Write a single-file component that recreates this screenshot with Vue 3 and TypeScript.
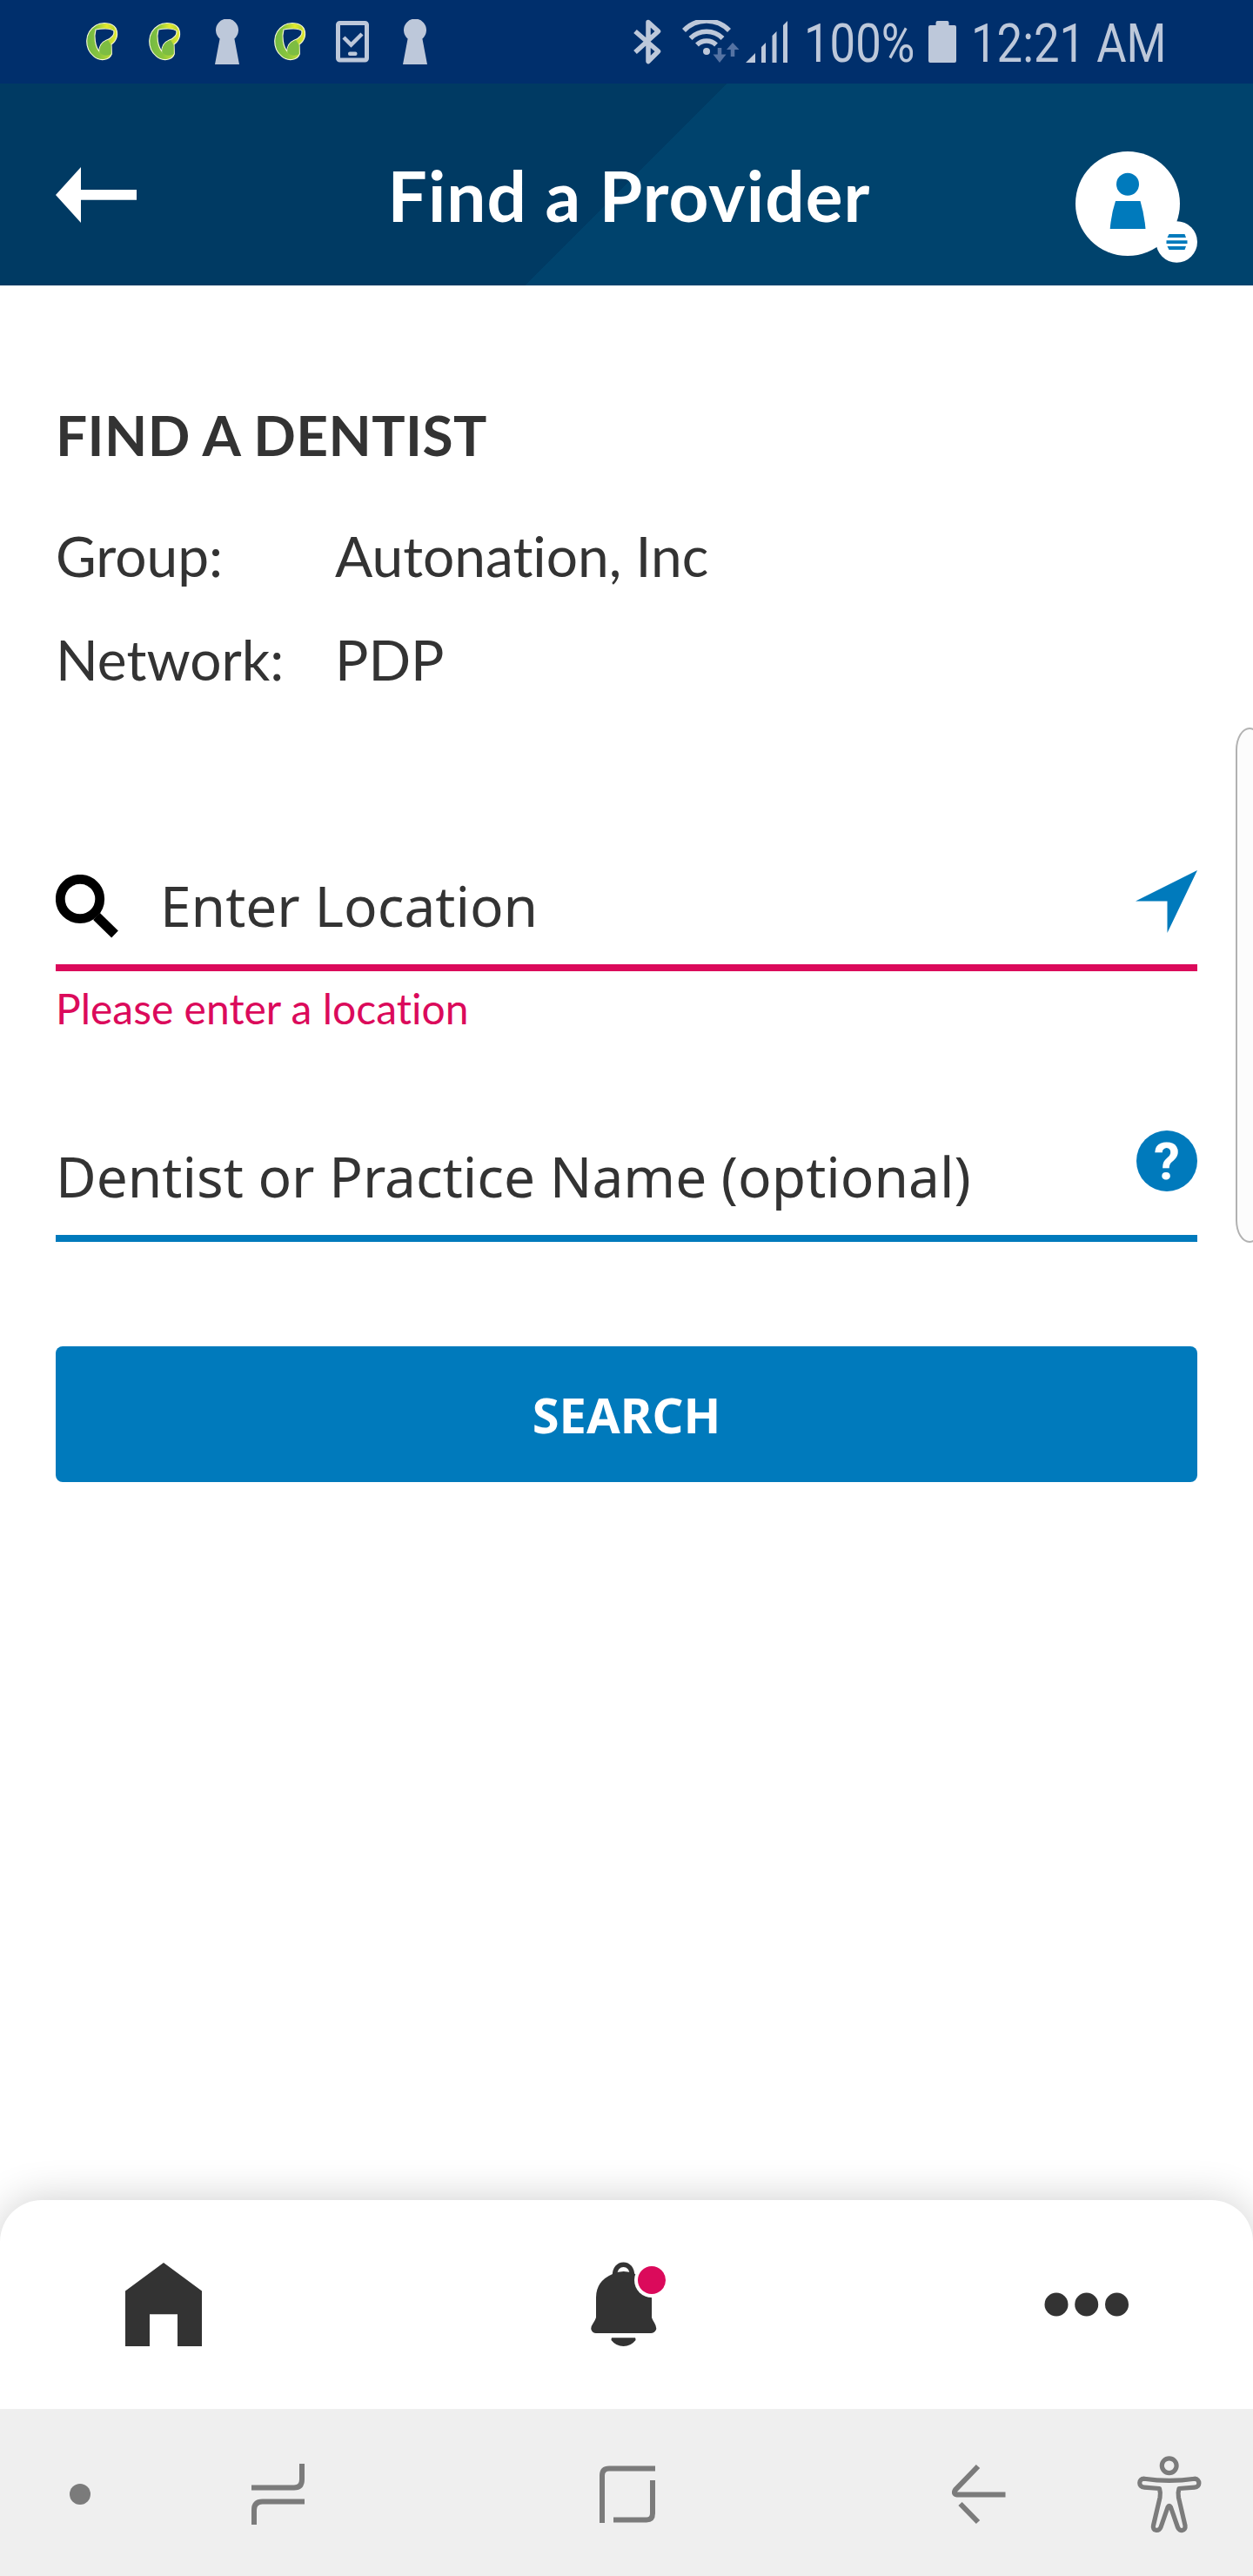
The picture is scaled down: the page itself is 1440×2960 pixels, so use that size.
<script setup lang="ts">
import { ref } from 'vue'

interface Detail {
  label: string
  value: string
}

type StatusIcon = 'leaf' | 'keyhole' | 'tablet'

const notifications: StatusIcon[] = ['leaf', 'leaf', 'keyhole', 'leaf', 'tablet', 'keyhole']

const details: Detail[] = [
  { label: 'Group:', value: 'Autonation, Inc' },
  { label: 'Network:', value: 'PDP' },
]

const location = ref('')
const practice = ref('')
</script>

<template>
  <div class="screen">
    <div class="status">
      <div class="notes">
        <span v-for="(icon, i) in notifications" :key="i" class="note">
          <svg v-if="icon === 'leaf'" width="40" height="48" viewBox="111 75 120 144">
            <defs>
              <linearGradient id="leafBody" x1="0" y1="0" x2="1" y2="0">
                <stop offset="0" stop-color="#72b944" />
                <stop offset="0.45" stop-color="#8cc63c" />
                <stop offset="1" stop-color="#e3e92f" />
              </linearGradient>
              <linearGradient id="leafTop" x1="0" y1="0" x2="1" y2="0">
                <stop offset="0" stop-color="#8cc63c" />
                <stop offset="0.6" stop-color="#e6ea2c" />
                <stop offset="1" stop-color="#b4d335" />
              </linearGradient>
            </defs>
            <path
              d="M150 91C168 79 206 79 219 100C229 121 223 143 204 156L205 189C197 212 163 215 143 197C112 171 108 117 150 91ZM150 105C143 130 148 162 162 180C162 163 170 149 186 142C201 136 215 127 213 110C203 99 169 101 150 105Z"
              fill="url(#leafBody)"
              fill-rule="evenodd"
              stroke="#f6f9d6"
              stroke-width="3.5"
            />
            <path d="M152 92C170 82 200 82 214 98L213 108C198 98 170 98 150 103Z" fill="url(#leafTop)" />
            <path d="M163 182C161 162 174 147 192 141L203 158L203 189C190 198 172 194 163 182Z" fill="#7dbd42" />
          </svg>
          <svg v-else-if="icon === 'keyhole'" width="28" height="52" viewBox="0 0 28 52">
            <path d="M5.600 22.500A13 13 0 1 1 22.400 22.500L28 52H0Z" fill="#bdc8da" />
          </svg>
          <svg v-else width="38" height="48" viewBox="0 0 38 48">
            <rect x="2.500" y="2.500" width="33" height="42.500" rx="2" fill="none" stroke="#bdc8da" stroke-width="5" />
            <path d="M9 19L17.500 27.500L30 15" fill="none" stroke="#bdc8da" stroke-width="4.500" />
            <rect x="14" y="35.500" width="10.500" height="4.500" rx="2" fill="#bdc8da" />
          </svg>
        </span>
      </div>
      <div class="signals">
        <svg class="bt" width="33" height="52" viewBox="0 0 33 52">
          <path d="M2 14L28.500 37L17 48.500V3.500L28.500 14L2 38" fill="none" stroke="#bdc8da" stroke-width="5.500" stroke-linejoin="round" />
        </svg>
        <svg class="wifi" width="66" height="50" viewBox="0 0 66 50">
          <g fill="none" stroke="#bdc8da" stroke-width="5.500">
            <path d="M2 12A36 36 0 0 1 54 12" />
            <path d="M9.500 21A26 26 0 0 1 46.500 21" />
            <path d="M17 28.500A15.500 15.500 0 0 1 39 28.500" />
          </g>
          <circle cx="28" cy="36" r="4" fill="#bdc8da" />
          <path d="M43 32V44M58 42V31" stroke="#5573a3" stroke-width="4.500" />
          <path d="M35.500 39.500H50.500L43 49ZM51 34H65.500L58 26Z" fill="#5573a3" />
        </svg>
        <svg class="bars" width="49" height="48" viewBox="0 0 49 48">
          <path d="M0 48L11 37V48ZM18 30L23 25V48H18ZM30.500 17L35.500 12V48H30.500ZM43 5L48 0V48H43Z" fill="#bdc8da" />
        </svg>
        <span class="percent"><b>100%</b></span>
        <svg class="battery" width="32" height="48" viewBox="0 0 32 48">
          <path d="M8.500 5V2Q8.500 0 10.500 0H21.500Q23.500 0 23.500 2V5H30Q32 5 32 7V46Q32 48 30 48H2Q0 48 0 46V7Q0 5 2 5Z" fill="#bdc8da" />
        </svg>
        <span class="clock"><b>12:21 AM</b></span>
      </div>
    </div>

    <header class="header">
      <svg class="back" width="93" height="64" viewBox="0 0 93 64">
        <path d="M0 32L29 0V26H93V37.700H29V64Z" fill="#fff" />
      </svg>
      <h1>Find a Provider</h1>
      <svg class="avatar" width="140" height="128" viewBox="0 0 140 128">
        <circle cx="60" cy="60" r="60" fill="#fff" />
        <circle cx="60" cy="37.700" r="13" fill="#007abc" />
        <path d="M46 57H74.500Q79 72 80.500 89H39.700Q41 72 46 57Z" fill="#007abc" />
        <circle cx="116.300" cy="104" r="23.700" fill="#fff" />
        <path d="M107.500 95H125.500L127 99H105.500ZM104.500 102.300H128.500V106H104.500ZM105.500 109H127L125.500 113H107.500Z" fill="#007abc" />
      </svg>
    </header>

    <main class="content">
      <h2>FIND A DENTIST</h2>
      <dl class="details">
        <div v-for="d in details" :key="d.label" class="detail">
          <dt>{{ d.label }}</dt>
          <dd>{{ d.value }}</dd>
        </div>
      </dl>

      <div class="field field-error">
        <svg class="lens" width="73" height="73" viewBox="0 0 73 73">
          <circle cx="28" cy="28" r="22.700" fill="none" stroke="#000" stroke-width="10.800" />
          <path d="M47 48L68 68.500" stroke="#000" stroke-width="11" />
        </svg>
        <input v-model="location" class="location" placeholder="Enter Location" />
        <svg class="locate" width="71" height="72" viewBox="0 0 71 72">
          <path d="M71 0L36.500 72V35.500H0Z" fill="#007abc" />
        </svg>
      </div>
      <p class="error">Please enter a location</p>

      <div class="field field-name">
        <input v-model="practice" placeholder="Dentist or Practice Name (optional)" />
        <span class="help">?</span>
      </div>

      <button class="search" type="button">SEARCH</button>
      <div class="edge"></div>
    </main>

    <nav class="tabs">
      <svg class="home" width="88" height="96" viewBox="0 0 88 96">
        <path d="M44 0L88 32.500V96H60V59.300H28V96H0V32.500Z" fill="#333" />
      </svg>
      <svg class="bell" width="90" height="98" viewBox="0 0 90 98">
        <path d="M27.500 17C26.500 -1.500 48.500 -1.500 47.500 17" fill="none" stroke="#333" stroke-width="5.500" />
        <path
          d="M25 14Q37.500 8 51 14Q70 22 70 43V64Q71 67 73 70Q76 75 75 78Q73 82 69 82H6Q2 82 0.500 78Q-0.500 75 3 70Q5 67 6 64V41Q6 22 25 14Z"
          fill="#333"
        />
        <path d="M24 87.300H51Q51.500 88 51.500 90Q46 97 37.500 97Q29 97 23.500 90Q23.500 88 24 87.300Z" fill="#333" />
        <circle cx="70" cy="21" r="20" fill="#fff" />
        <circle cx="70" cy="21" r="16" fill="#db0a5b" />
      </svg>
      <svg class="more" width="98" height="28" viewBox="0 0 98 28">
        <circle cx="14" cy="14" r="13.500" fill="#333" />
        <circle cx="48.700" cy="14" r="13.500" fill="#333" />
        <circle cx="83.500" cy="14" r="13.500" fill="#333" />
      </svg>
    </nav>

    <div class="system">
      <span class="dot"></span>
      <svg class="recent" width="62" height="70" viewBox="0 0 62 70">
        <path d="M0 27.500H49Q58 27.500 58 18V0M61 43.500H12.500Q3 43.500 3 53V70" fill="none" stroke="#7b7b7b" stroke-width="6" />
      </svg>
      <svg class="square" width="65" height="66" viewBox="0 0 65 66">
        <path d="M64 3.500H11Q3 3.500 3 11.500V66M61 17V55Q61 62.500 54 62.500H16" fill="none" stroke="#7b7b7b" stroke-width="6" />
      </svg>
      <svg class="return" width="62" height="70" viewBox="0 0 62 70">
        <path d="M61.500 35.500H6Q1 34.500 4 30L30 3M9.500 46L30 67" fill="none" stroke="#7b7b7b" stroke-width="6" />
      </svg>
      <svg class="person" width="74" height="90" viewBox="0 0 74 90">
        <g fill="none" stroke="#7b7b7b" stroke-width="5.200" stroke-linejoin="round">
          <circle cx="36.700" cy="11.200" r="8.400" />
          <path
            d="M8 26.200Q36.500 30.500 66 26.200C72.500 26.500 72.500 36 66 36.200L48 37.500Q46.500 42 47.500 48L55 80C56 86.500 48.500 87.500 46.500 82L38.500 59Q36.700 55.500 35 59L27 82C24.500 87.500 17 86 18.500 80L26 48Q27 42 25.500 37.500L8 36.200C1 36 1 26 8 26.200Z"
          />
        </g>
      </svg>
    </div>
  </div>
</template>

<style>
body {
  margin: 0;
}
</style>

<style scoped>
.screen {
  width: 1440px;
  height: 2960px;
  display: flex;
  flex-direction: column;
  overflow: hidden;
  background: #fff;
  color: #333;
  font-family: Lato, 'Open Sans', sans-serif;
  font-variant-ligatures: none;
}
svg {
  display: block;
  flex: none;
}
.status {
  height: 96px;
  background: #002f6c;
  display: flex;
  justify-content: space-between;
  color: #bdc8da;
}
.notes {
  display: flex;
  align-items: center;
  padding-left: 81px;
}
.note {
  width: 72px;
  display: flex;
  justify-content: center;
}
.signals {
  display: flex;
  align-items: center;
  width: 712px;
}
.signals b {
  display: inline-block;
  font-weight: 400;
  transform-origin: 0 50%;
  transform: scaleX(0.863);
}
.wifi {
  margin-left: 23px;
}
.bars {
  margin-left: 7px;
}
.percent,
.clock {
  font-family: Roboto, sans-serif;
  font-size: 61px;
  line-height: 96px;
  padding-top: 4px;
  white-space: nowrap;
}
.percent {
  width: 143px;
  margin-left: 18px;
}
.clock {
  margin-left: 17px;
  width: 225px;
}
.header {
  height: 232px;
  box-sizing: border-box;
  padding: 0 64px;
  display: flex;
  align-items: flex-start;
  justify-content: space-between;
  background: linear-gradient(135deg, #003a63 49.94%, #00436d 49.97%);
}
.back {
  margin-top: 96px;
}
h1 {
  margin: 78px 0 0 53px;
  font-size: 80px;
  line-height: 100px;
  color: #fff;
  letter-spacing: 1.1px;
}
.avatar {
  margin-top: 78px;
}
.content {
  position: relative;
  flex: 1;
  padding: 132px 64px 0;
}
h2 {
  margin: 0;
  font-size: 64px;
  line-height: 80px;
  letter-spacing: 0.4px;
}
.details {
  margin: 59px 0 0;
  font-size: 64px;
  line-height: 80px;
  display: flex;
  flex-direction: column;
  gap: 39px;
}
.detail {
  display: flex;
}
dt {
  width: 321px;
}
dd {
  margin: 0;
}
.field {
  display: flex;
  align-items: flex-start;
  box-sizing: border-box;
  border-bottom: 8px solid #007abc;
}
.field input {
  flex: 1;
  min-width: 0;
  height: 80px;
  padding: 0;
  border: 0;
  outline: 0;
  background: none;
  font: 64px/80px 'Noto Sans', sans-serif;
  color: #333;
}
.field input::placeholder {
  color: #333;
  opacity: 1;
}
.field-error {
  height: 116px;
  margin-top: 202px;
  border-color: #db0a5b;
}
.lens {
  margin-top: 5px;
}
.field .location {
  margin: 1px 0 0 47px;
}
.error {
  margin: 13px 0 0;
  font-size: 48px;
  line-height: 60px;
  color: #db0a5b;
}
.field-name {
  height: 128px;
  margin-top: 110px;
}
.field-name input {
  margin-top: 13px;
}
.help {
  width: 70px;
  height: 70px;
  border-radius: 50%;
  background: #007abc;
  color: #fff;
  font: 700 60px/72px Roboto, sans-serif;
  text-align: center;
}
.search {
  display: block;
  width: 100%;
  height: 156px;
  margin-top: 120px;
  padding: 0;
  border: 0;
  border-radius: 8px;
  background: #007abc;
  color: #fff;
  font: 700 56px/154px 'Noto Sans', sans-serif;
}
.edge {
  position: absolute;
  top: 508px;
  right: -12px;
  width: 32px;
  height: 592px;
  box-sizing: border-box;
  border: 2px solid #b2b2b2;
  border-radius: 20px / 32px;
  background: #fcfcfc;
}
.tabs {
  height: 240px;
  box-sizing: border-box;
  padding: 0 142px 0 144px;
  display: flex;
  align-items: flex-start;
  border-radius: 48px 48px 0 0;
  background: #fff;
  box-shadow: 0 0 48px rgba(0, 0, 0, 0.2);
}
.home {
  margin-top: 72px;
}
.bell {
  margin: 71px 0 0 447px;
}
.more {
  margin: 106px 0 0 auto;
}
.system {
  position: relative;
  height: 192px;
  background: #efefef;
  display: flex;
  align-items: flex-start;
}
.dot {
  width: 24px;
  height: 24px;
  margin: 86px 0 0 80px;
  border-radius: 50%;
  background: #7b7b7b;
}
.recent {
  margin: 63px 0 0 185px;
}
.square {
  margin: 65px 0 0 338px;
}
.return {
  margin: 63px 0 0 340px;
}
.person {
  margin: 54px 0 0 151px;
}
</style>
